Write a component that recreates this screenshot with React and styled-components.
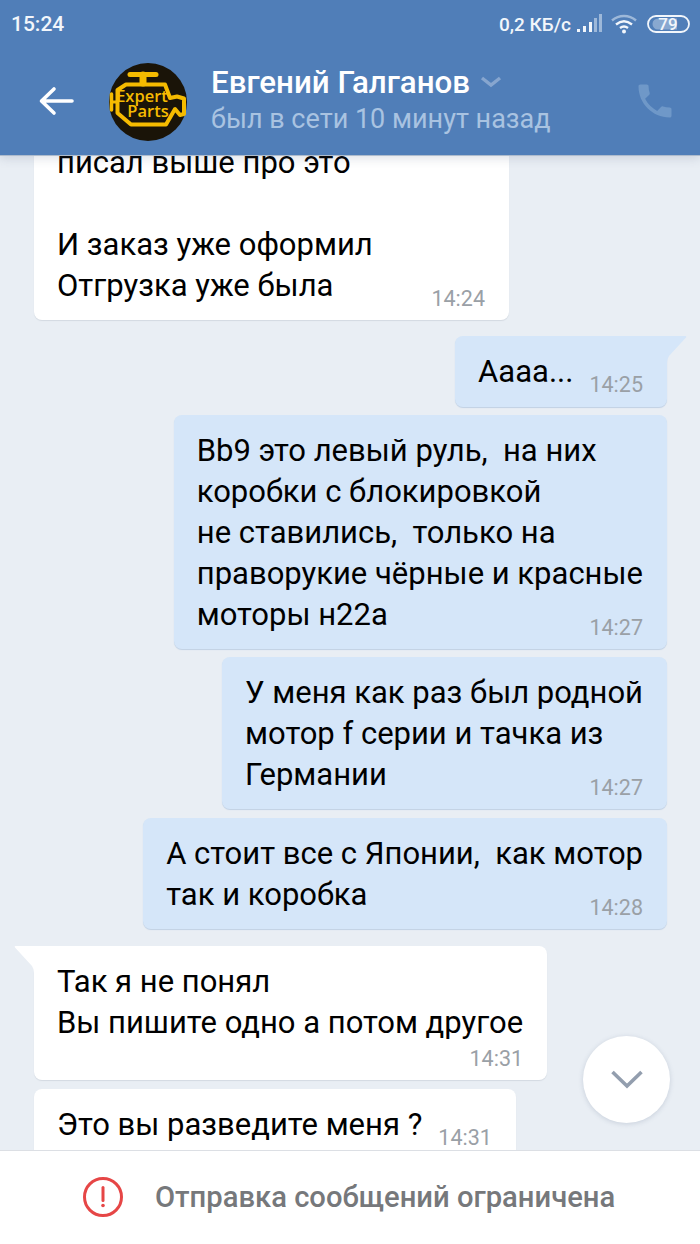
import React from 'react';
import styled, { createGlobalStyle } from 'styled-components';

const GlobalStyle = createGlobalStyle`
  html, body { margin: 0; padding: 0; }
  body { font-family: Roboto, "Noto Sans", sans-serif; background: #e9eef4; }
`;

const Screen = styled.div`
  width: 700px;
  height: 1244px;
  display: flex;
  flex-direction: column;
  position: relative;
  overflow: hidden;
  background: #e9eef4;
`;

const Header = styled.header`
  height: 155px;
  flex-shrink: 0;
  background: #507eb8;
  display: flex;
  flex-direction: column;
  position: relative;
  z-index: 2;
  box-shadow: 0 1px 0 #aebccd, 0 3px 10px rgba(60, 80, 110, 0.18);
`;

const StatusBar = styled.div`
  height: 46px;
  display: flex;
  align-items: center;
  justify-content: space-between;
  padding: 1px 10px 0 11px;
  color: #f2f6fb;
  font-size: 21px;
  font-weight: 500;
`;

const StatusRight = styled.div`
  display: flex;
  align-items: center;
  font-size: 19px;
`;

const NavRow = styled.div`
  flex: 1;
  display: flex;
  align-items: flex-start;
  padding-left: 38px;
`;

const BackButton = styled.svg`
  width: 36px;
  height: 32px;
  margin-top: 38px;
  flex-shrink: 0;
`;

const Avatar = styled.svg`
  width: 78px;
  height: 78px;
  margin: 16px 0 0 35px;
  flex-shrink: 0;
`;

const Peer = styled.div`
  margin: 17px 0 0 24px;
  display: flex;
  flex-direction: column;
`;

const PeerName = styled.div`
  display: flex;
  align-items: center;
  color: #fff;
  font-size: 31.3px;
  font-weight: 500;
  line-height: 38px;
  white-space: nowrap;
`;

const PeerStatus = styled.div`
  color: #a9c3e1;
  font-size: 27px;
  line-height: 34px;
  white-space: nowrap;
`;

const Chevron = styled.svg`
  width: 22px;
  height: 12px;
  margin: -2px 0 0 10px;
`;

const CallIcon = styled.svg`
  width: 44px;
  height: 44px;
  margin: 32px 0 0 82px;
`;

const MessageList = styled.main`
  flex: 1;
  min-height: 0;
  overflow: hidden;
  display: flex;
  flex-direction: column;
  padding: 0 33px 0 34px;
`;

const Bubble = styled.div`
  position: relative;
  flex-shrink: 0;
  box-sizing: border-box;
  align-self: ${({ $out }) => ($out ? 'flex-end' : 'flex-start')};
  width: ${({ $width }) => ($width ? `${$width}px` : 'auto')};
  margin-top: ${({ $gap }) => $gap}px;
  padding: 15px 24px ${({ $row }) => ($row ? '15px' : '11px')};
  display: flex;
  flex-direction: ${({ $row }) => ($row ? 'row' : 'column')};
  align-items: ${({ $row }) => ($row ? 'flex-end' : 'stretch')};
  gap: ${({ $row }) => ($row ? '16px' : '0')};
  background: ${({ $out }) => ($out ? '#d5e6f9' : '#ffffff')};
  border-radius: ${({ $out, $tail }) =>
    $tail ? ($out ? '8px 0 8px 8px' : '0 8px 8px 8px') : '8px'};
  box-shadow: 0 1px 1px ${({ $out }) => ($out ? '#c0d0e4' : '#d3d9e1')};
  color: #000;
  font-size: 31px;
  line-height: 41px;
`;

const BubbleText = styled.div`
  white-space: pre;
  margin-left: -1px;
`;

const Time = styled.span`
  align-self: flex-end;
  flex-shrink: 0;
  margin-top: ${({ $offset }) => $offset ?? -17}px;
  margin-bottom: ${({ $row }) => ($row ? '-3px' : '0')};
  color: #9aa0a6;
  font-size: 21.5px;
  line-height: 20px;
`;

const Tail = styled.svg`
  position: absolute;
  top: 0;
  width: 21px;
  height: 30px;
  ${({ $out }) => ($out ? 'right: -20px;' : 'left: -20px;')}
`;

const ScrollDown = styled.button`
  position: absolute;
  left: 583px;
  top: 1036px;
  width: 87px;
  height: 87px;
  padding: 0;
  border: none;
  border-radius: 50%;
  background: #fff;
  box-shadow: 0 1px 5px rgba(80, 100, 130, 0.22);
  display: flex;
  align-items: center;
  justify-content: center;
  z-index: 1;
`;

const Footer = styled.footer`
  height: 94px;
  flex-shrink: 0;
  box-sizing: border-box;
  position: relative;
  z-index: 2;
  background: #fff;
  border-top: 1px solid #dcdfe4;
  display: flex;
  align-items: center;
  padding: 0 0 2px 83px;
  gap: 32px;
`;

const FooterText = styled.div`
  color: #76787b;
  font-size: 29.2px;
  font-weight: 500;
  white-space: nowrap;
`;

const messages = [
  { id: 1, gap: -28, width: 475, time: '14:24', text: 'писал выше про это\n\nИ заказ уже оформил\nОтгрузка уже была' },
  { id: 2, gap: 16, out: true, tail: true, row: true, time: '14:25', text: 'Аааа...' },
  { id: 3, gap: 8, out: true, time: '14:27', text: 'Bb9 это левый руль,  на них\nкоробки с блокировкой\nне ставились,  только на\nправорукие чёрные и красные\nмоторы н22а' },
  { id: 4, gap: 8, out: true, time: '14:27', text: 'У меня как раз был родной\nмотор f серии и тачка из\nГермании' },
  { id: 5, gap: 9, out: true, time: '14:28', text: 'А стоит все с Японии,  как мотор\nтак и коробка' },
  { id: 6, gap: 17, tail: true, time: '14:31', offset: 6, text: 'Так я не понял\nВы пишите одно а потом другое' },
  { id: 7, gap: 9, row: true, time: '14:31', text: 'Это вы разведите меня ?' },
];

const App = () => {
  return (
    <Screen>
      <GlobalStyle />
      <Header>
        <StatusBar>
          <span>15:24</span>
          <StatusRight>
            <span>0,2 КБ/с</span>
            <svg width="26" height="20" viewBox="0 0 26 20" style={{ marginLeft: 5 }}>
              <rect x="1" y="15" width="3" height="3" fill="#f2f6fb" />
              <rect x="7" y="12" width="3" height="6" fill="#f2f6fb" />
              <rect x="13" y="8" width="3" height="10" fill="#f2f6fb" />
              <rect x="18" y="4" width="3" height="14" fill="#9db8d9" />
              <rect x="23" y="0" width="3" height="18" fill="#9db8d9" />
            </svg>
            <svg width="26" height="20" viewBox="0 0 26 20" style={{ marginLeft: 9 }}>
              <path d="M1 6.500C8 .5 18 .5 25 6.500" fill="none" stroke="#9db8d9" strokeWidth="2.400" />
              <path d="M5 10.500c5-4 11-4 16 0" fill="none" stroke="#f2f6fb" strokeWidth="2.400" />
              <path d="M9 14c3-2.300 5-2.300 8 0" fill="none" stroke="#f2f6fb" strokeWidth="2.400" />
              <circle cx="13" cy="17.500" r="2" fill="#f2f6fb" />
            </svg>
            <svg width="43" height="18" viewBox="0 0 43 18" style={{ marginLeft: 10 }}>
              <rect x="1" y="1" width="41" height="16" rx="8" fill="none" stroke="#f2f6fb" strokeWidth="1.800" />
              <path d="M11 3.500h19v11H11a5.500 5.500 0 0 1 0-11z" fill="#88a8d0" />
              <text x="21" y="15" textAnchor="middle" fontSize="17" fontWeight="500" fill="#f2f6fb" fontFamily="Roboto, sans-serif">79</text>
            </svg>
          </StatusRight>
        </StatusBar>
        <NavRow>
          <BackButton viewBox="0 0 36 32">
            <path d="M34 16H5M16 4 3.500 16 16 28" fill="none" stroke="#fff" strokeWidth="3.600" strokeLinecap="round" strokeLinejoin="round" />
          </BackButton>
          <Avatar viewBox="0 0 78 78">
            <circle cx="39" cy="39" r="39" fill="#1a1408" />
            <g fill="none" stroke="#f5bb00" strokeLinejoin="round" strokeLinecap="round">
              <path d="M21 11.500H47" strokeWidth="5" />
              <path d="M34 12V20" strokeWidth="7" />
              <path d="M2.500 31V47" strokeWidth="3.500" />
              <path d="M3 39H8" strokeWidth="3" />
              <path d="M17 21.500H56L61 35L68 33.500L75 35.500V51L71 52L66 46L57 61.500H22L8.500 50V27Z" strokeWidth="4" />
            </g>
            <text x="33" y="39" textAnchor="middle" fontSize="16.500" fontWeight="600" fill="#f5bb00" fontFamily="'Open Sans', sans-serif">Expert</text>
            <text x="39" y="54" textAnchor="middle" fontSize="16.500" fontWeight="600" fill="#f5bb00" fontFamily="'Open Sans', sans-serif">Parts</text>
          </Avatar>
          <Peer>
            <PeerName>
              Евгений Галганов
              <Chevron viewBox="0 0 22 12">
                <path d="M2 2l9 7 9-7" fill="none" stroke="#87a6cf" strokeWidth="3.400" />
              </Chevron>
            </PeerName>
            <PeerStatus>был в сети 10 минут назад</PeerStatus>
          </Peer>
          <CallIcon viewBox="0 0 24 24">
            <path d="M6.600 10.800c1.400 2.800 3.800 5.100 6.600 6.600l2.200-2.200c.3-.3.700-.4 1-.2 1.100.4 2.300.6 3.600.6.600 0 1 .4 1 1V20c0 .6-.4 1-1 1C10.600 21 3 13.400 3 4c0-.6.400-1 1-1h3.500c.6 0 1 .4 1 1 0 1.300.2 2.500.6 3.600.1.300 0 .7-.2 1l-2.300 2.200z" fill="#6f98c8" />
          </CallIcon>
        </NavRow>
      </Header>

      <MessageList>
        {messages.map((m) => (
          <Bubble key={m.id} $out={m.out} $tail={m.tail} $row={m.row} $gap={m.gap} $width={m.width}>
            {m.tail && (
              <Tail $out={m.out} viewBox="0 0 21 30">
                {m.out ? (
                  <path d="M0 0H19.500Q21 0 20 1.500L3 20Q1 23 1 27V30H0Z" fill="#d5e6f9" />
                ) : (
                  <path d="M21 0H1.500Q0 0 1 1.500L18 20Q20 23 20 27V30H21Z" fill="#fff" />
                )}
              </Tail>
            )}
            <BubbleText>{m.text}</BubbleText>
            <Time $row={m.row} $offset={m.row ? 0 : m.offset}>{m.time}</Time>
          </Bubble>
        ))}
      </MessageList>

      <ScrollDown aria-label="Вниз">
        <svg width="34" height="22" viewBox="0 0 34 22">
          <path d="M2.500 3 17 17 31.500 3" fill="none" stroke="#939eae" strokeWidth="3.600" />
        </svg>
      </ScrollDown>

      <Footer>
        <svg width="40" height="40" viewBox="0 0 40 40">
          <circle cx="20" cy="20" r="18.500" fill="none" stroke="#e64646" strokeWidth="3" />
          <path d="M20 10.500v13" stroke="#e64646" strokeWidth="3" strokeLinecap="round" />
          <circle cx="20" cy="28.500" r="1.800" fill="#e64646" />
        </svg>
        <FooterText>Отправка сообщений ограничена</FooterText>
      </Footer>
    </Screen>
  );
};

export default App;
